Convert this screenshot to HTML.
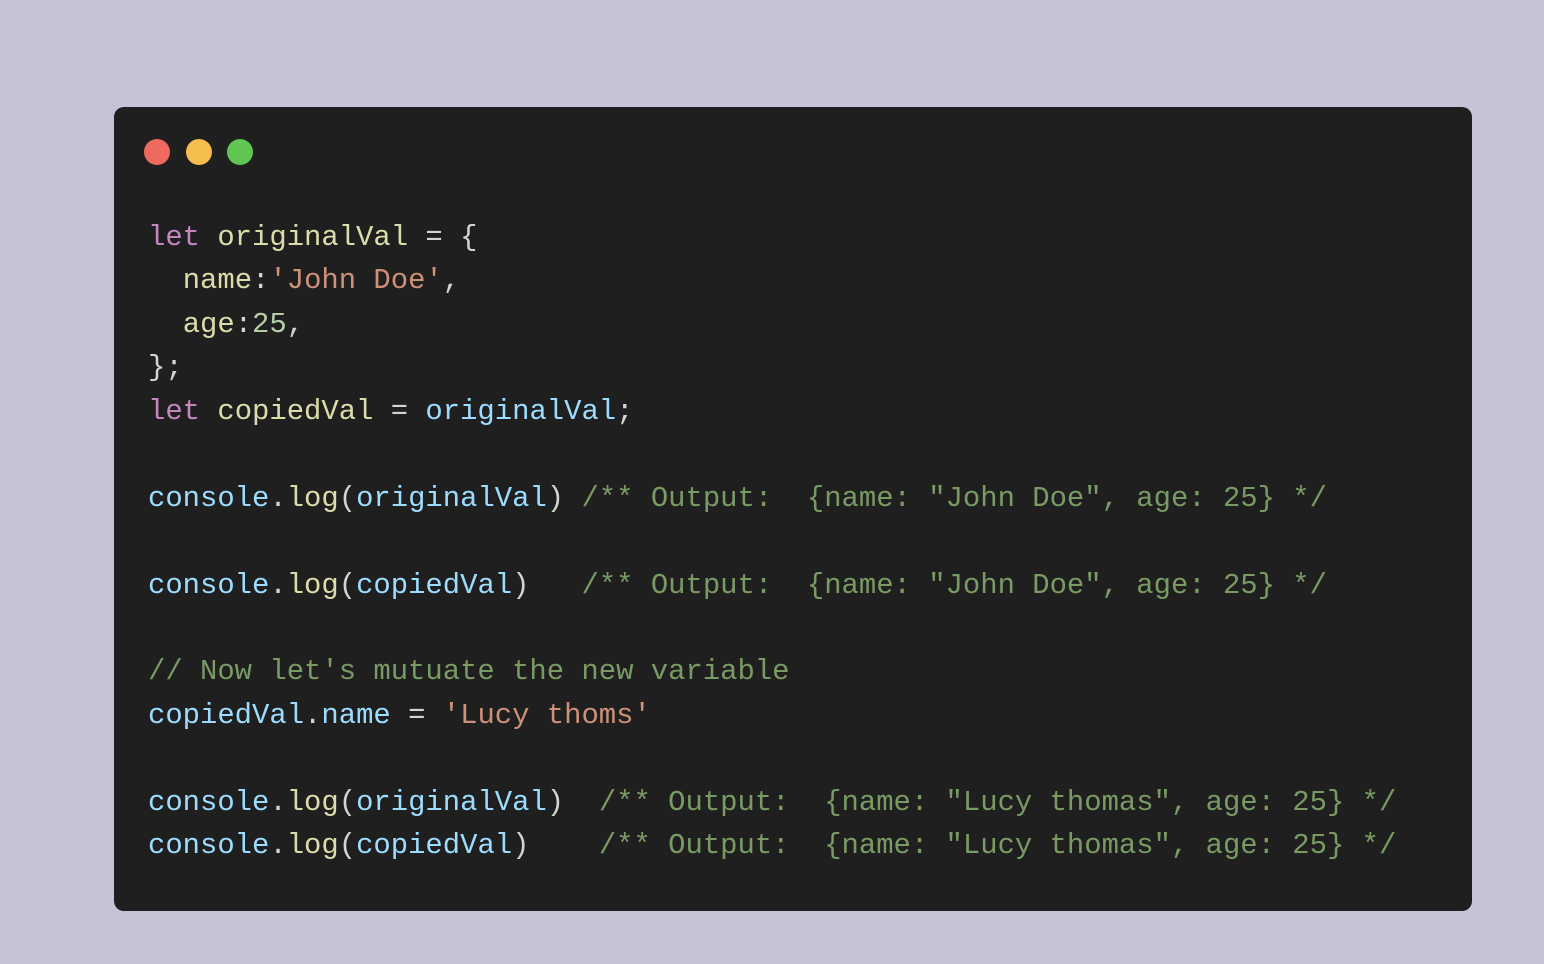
<!DOCTYPE html>
<html><head><style>
html,body{margin:0;padding:0;}
body{width:1544px;height:964px;background:#c5c4d6;position:relative;overflow:hidden;}
.card{position:absolute;left:114px;top:107px;width:1358px;height:804px;background:#1f1f1f;border-radius:10px;}
.dot{position:absolute;top:139px;width:26px;height:26px;border-radius:50%;}
pre{position:absolute;left:148px;top:216px;margin:0;font-family:"Liberation Mono",monospace;font-size:28.9px;line-height:43.43px;color:#d4d4d4;}
.k{color:#c586c0}.f{color:#dcdcaa}.s{color:#ce9178}.v{color:#9cdcfe}.c{color:#7a9a64}.n{color:#b5cea8}
</style></head><body>
<div class="card"></div>
<div class="dot" style="left:144px;background:#ee6a5f"></div>
<div class="dot" style="left:186px;background:#f5bf4f"></div>
<div class="dot" style="left:227px;background:#61c554"></div>
<pre><span class="k">let</span> <span class="f">originalVal</span> = {
  <span class="f">name</span>:<span class="s">'John Doe'</span>,
  <span class="f">age</span>:<span class="n">25</span>,
};
<span class="k">let</span> <span class="f">copiedVal</span> = <span class="v">originalVal</span>;

<span class="v">console</span>.<span class="f">log</span>(<span class="v">originalVal</span>) <span class="c">/** Output:  {name: "John Doe", age: 25} */</span>

<span class="v">console</span>.<span class="f">log</span>(<span class="v">copiedVal</span>)   <span class="c">/** Output:  {name: "John Doe", age: 25} */</span>

<span class="c">// Now let's mutuate the new variable</span>
<span class="v">copiedVal</span>.<span class="v">name</span> = <span class="s">'Lucy thoms'</span>

<span class="v">console</span>.<span class="f">log</span>(<span class="v">originalVal</span>)  <span class="c">/** Output:  {name: "Lucy thomas", age: 25} */</span>
<span class="v">console</span>.<span class="f">log</span>(<span class="v">copiedVal</span>)    <span class="c">/** Output:  {name: "Lucy thomas", age: 25} */</span></pre>
</body></html>
